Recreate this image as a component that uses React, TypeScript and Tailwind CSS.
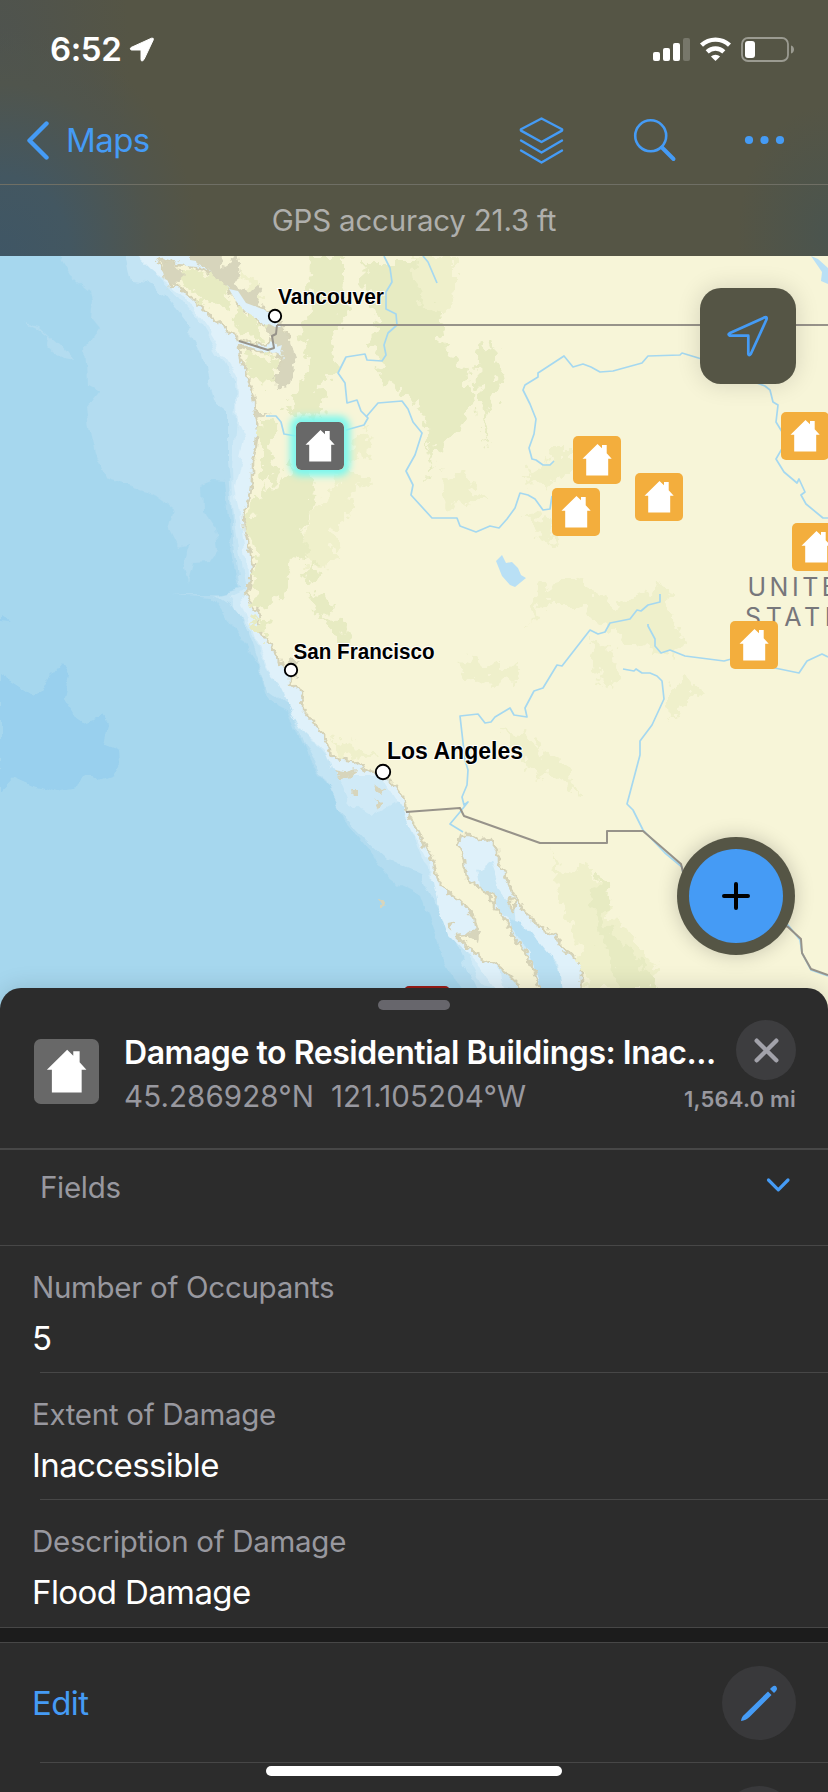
import React from "react";

const HOUSE = "M24.5 8L29 12.3V9H33.7V17.2L38.7 22.7H35.2V39.5H13.2V22.7H9.5Z";

const incidents: [number, number][] = [
  [573, 436],
  [635, 473],
  [552, 488],
  [781, 412],
  [792, 523],
  [730, 621],
];

const VANCOUVER_ISLAND =
  "M157 263L163 259L178 264L190 265L206 272L218 277L225 288L232 294L240 309L250 315L262 324L268 331L273 339L268 344L259 345L248 341L238 338L230 333L222 325L213 319L205 309L195 301L185 292L178 285L170 287L168 276Z";
const MAINLAND =
  "M188 250L196 262L207 265L215 270L224 280L230 287L238 291L246 300L258 306L272 312L281 325L290 338L289 372L280 388L275 380L282 358L272 352L258 352L239 346L240 357L247 370L250 385L254 395L256 412L258 430L256 445L252 460L252 480L249 500L244 515L245 530L250 550L253 565L252 580L246 593L250 602L258 612L260 630L270 645L277 655L280 664L290 670L290 684L303 692L302 709L313 722L325 737L330 750L331 758L352 761L370 772L383 774L395 786L403 797L407 812L417 829L426 848L434 862L437 878L448 893L462 903L474 916L477 930L466 935L456 936L470 949L482 959L497 965L509 975L518 984L522 1000L524 1040L545 1040L539 985L535 972L524 950L514 938L507 921L496 908L487 895L478 886L466 878L464 860L459 845L461 835L470 835L479 840L490 839L498 850L498 862L505 874L513 893L521 905L531 919L545 931L554 934L560 945L573 956L582 964L582 976L580 1040L840 1040L840 250Z";

const SHELVES: { fill: string; d: string }[] = [
  {
    fill: "#b3dcf0",
    d: "M55 250L70 275L90 292L92 300L90 318L98 328L86 345L88 385L99 391L86 408L90 430L96 455L106 478L130 486L151 493L175 510L170 530L178 546L187 543L183 570L187 583L192 563L210 562L218 550L215 528L203 510L202 485L215 480L225 481L229 520L232 560L239 590L222 594H170L213 597L232 625L258 665L269 700L288 710L310 760L330 790L345 820L370 850L380 868L400 885L420 895L440 950L470 1010L560 1010L560 700L300 600L290 300L230 250Z",
  },
  {
    fill: "#c3e4f4",
    d: "M126 250L132 280L145 282L165 295L185 320L203 355L214 400L228 410L228 460L232 510L235 555L240 590L216 596L240 612L254 650L268 690L290 706L305 745L325 780L339 809L365 838L390 862L420 875L445 920L480 1000L580 1000L560 700L300 600L290 300L230 250Z",
  },
  {
    fill: "#d0eaf7",
    d: "M131 250L150 268L173 290L198 320L222 360L234 383L236 420L232 465L233 510L240 555L245 590L228 598L245 620L264 660L288 700L306 735L333 765L350 805L370 817L400 800L422 855L445 908L480 985L580 1000L560 700L300 600L290 300L230 250Z",
  },
  {
    fill: "#dff1fa",
    d: "M132 250L153 271L181 291L208 330L236 377L238 425L245 440L235 487L240 520L246 555L248 588L242 600L256 640L272 672L291 712L305 734L325 752L331 770L350 775L380 775L408 820L430 865L438 905L448 935L480 968L508 1000L450 830L300 600L290 300L230 250Z",
  },
  { fill: "#b3dcf0", d: "M22 321L38 325L50 336L60 345L73 360L62 358L49 347L50 337L38 328Z" },
  {
    fill: "#99d0ee",
    d: "M0 675L32 696L53 675L62 664L69 675L63 700L72 715L82 722L102 715L109 725L105 747L118 752L119 762L112 775L98 780L83 775L77 788L56 792L32 785L14 777L0 792Z",
  },
  { fill: "#99d0ee", d: "M0 615L10 622L0 621Z" },
];

const GULF: { fill: string; d: string }[] = [
  { fill: "#dff1fa", d: "M455 828H500L515 890L560 938L590 965L585 1010H545L520 930L455 878Z" },
  { fill: "#c9e7f5", d: "M476 870L490 862L498 885L512 905L514 925L540 950L560 965L565 1010H548L528 950L506 915L480 890Z" },
  { fill: "#b9e0f3", d: "M508 918L522 922L540 945L560 970L566 1010H548L530 955Z" },
];

const SAND = [
  "M188 250L222 250L221 270L232 262L236 250L240 275L234 285L250 292L261 282L258 305L248 308L230 290L222 282L205 268L190 262Z",
  "M272 312L282 326L290 340L296 358L290 385L276 390L275 374L284 358L276 345L266 332Z",
  "M160 259L175 264L185 275L174 285L165 280Z",
  "M333 770L345 772L357 769L354 776L340 778Z",
  "M351 791h7v5h-6z",
  "M374 785L384 790L382 795L376 791Z",
  "M374 797L382 805L379 808Z",
  "M379 899L385 902L384 909L380 906Z",
  "M288 659L300 661L291 668L300 679L290 675Z",
  "M255 413L269 413L258 419Z",
  "M470 930L480 932L478 942L468 937Z",
];

const FOREST = [
  "M178 271L190 268L215 278L225 290L230 305L218 306L205 305L190 292Z",
  "M234 318L245 312L262 322L264 342L248 338L236 332Z",
  "M245 354L275 355L282 360L270 380L262 388L252 375Z",
  "M308 258H345V275L340 292L350 310L335 330L330 345L338 370L322 385L320 420L285 410L290 395L302 385L308 360L303 330L312 310Z",
  "M365 262H384V290L372 300L364 285Z",
  "M260 420L275 418L272 445L278 480L268 490L262 470Z",
  "M252 495L280 488L292 460L318 482L310 510L302 530L310 550L290 565L285 590L262 612L252 598L258 560L248 535Z",
  "M385 262H415L420 295L440 320L445 345L468 375L472 400L460 425L450 440L432 450L430 475L440 465L425 478L432 440L414 400L385 380L375 350L365 345L380 330L370 305Z",
  "M480 342L496 348L503 372L494 405L482 420L492 448L480 430L478 400L476 365Z",
  "M250 618L270 622L262 640Z",
  "M308 592L325 596L333 612L328 620L314 612Z",
  "M300 575L320 562L312 580Z",
  "M325 620L346 622L345 655L336 640Z",
  "M598 872L610 895L605 925L618 940L645 965L658 990H618L612 965L600 935L592 900Z",
];

const SCRUB = [
  "M414 258H455V290L445 320L414 300Z",
  "M345 450L372 430L370 455L345 465L372 482L355 490L345 520L330 530L340 560L320 570L300 560L310 510L330 495Z",
  "M442 480L465 475L485 498L460 502L447 508Z",
  "M522 475L540 470L550 450L573 450V470L550 485L530 482Z",
  "M522 515L550 520L555 545L545 540Z",
  "M535 590L575 577L605 600L620 605L640 595L665 585L672 620L685 640L670 655L645 650L625 640L600 625L580 605L545 605L528 625Z",
  "M460 678L470 652L483 665L518 667L516 682L490 680L462 682Z",
  "M500 732L530 735L545 755L575 768L570 780L580 795L552 778L530 770Z",
  "M590 640L612 650L620 680L605 690L595 660Z",
  "M668 690L685 680L705 692L685 700L672 725Z",
  "M332 738L350 746L380 756L365 762L345 755Z",
  "M549 850L562 875L590 865L600 900L625 930L655 965L645 990H590L580 960L568 920L555 880Z",
  "M240 270L262 285L262 300L250 298Z",
];

const RIVERS = [
  "M384 256L390 268L392 282L386 292L386 309L396 314L397 325L388 333L384 345L386 355L382 361L367 360L365 354L346 357L338 373L345 383L347 403L357 400L361 411L368 418L364 425L346 430",
  "M266 416L276 416L281 422L284 434L296 436",
  "M366 417L378 403L402 401L408 409L413 422L422 433L415 455L406 471L413 485L411 495L432 518L457 518L460 526L476 532L490 526L499 528L507 519L515 508L520 493L528 495L535 499L543 510L550 509L552 496",
  "M423 256L428 262L437 283",
  "M554 461L550 465L543 465L536 460L532 459L529 448L534 434L536 419L530 404L523 390L525 385L538 377V373L564 356L573 367L583 364L591 367L600 372L613 371L642 363L648 356L680 355L682 353L705 360L735 375L765 386L770 390L773 402L778 405L776 422L787 440L776 459L784 472L797 483L799 479L805 492L801 495L806 504L823 518H828",
  "M660 594V602L648 605L641 611L637 610L630 619L610 623L605 632L598 634L590 630L562 666L557 665L543 688L534 691L525 708L527 717L514 715L510 708L495 717L491 722L485 723L478 714L460 716L465 760L468 770L467 785L462 797L464 805L468 802L460 812L450 824L463 832",
  "M648 624V626L655 639L655 646L661 653L670 650L685 656L724 661L735 658L770 667L799 673L807 661L822 654L828 657",
  "M623 669L634 671L636 669L642 673L650 673L657 676L662 681L664 699L652 725L640 741V755L627 804L633 810L643 830",
  "M643 830L665 853L682 867L685 885L745 920L788 925L800 940L802 953L811 970L828 976",
];

const BORDERS = [
  "M277 325L276 334L272 336L274 348L268 350L239 341",
  "M277 325H828",
  "M406 812L460 808L464 816L540 843H607V831H643L681 864L685 880L730 900L788 927L801 939L802 953L811 969L828 975",
];

function MapCanvas() {
  return (
    <svg className="block h-[774px] w-[828px]" viewBox="0 256 828 774">
      <defs>
        <filter id="coast" x="0" y="250" width="840" height="790" filterUnits="userSpaceOnUse">
          <feTurbulence type="fractalNoise" baseFrequency="0.16" numOctaves="2" seed="4" />
          <feDisplacementMap in="SourceGraphic" scale="9" xChannelSelector="R" yChannelSelector="G" />
        </filter>
        <filter id="rough" x="0" y="250" width="840" height="790" filterUnits="userSpaceOnUse">
          <feTurbulence type="fractalNoise" baseFrequency="0.09" numOctaves="3" seed="9" />
          <feDisplacementMap in="SourceGraphic" scale="26" xChannelSelector="R" yChannelSelector="G" />
        </filter>
        <filter id="shelf" x="-20" y="230" width="880" height="820" filterUnits="userSpaceOnUse">
          <feTurbulence type="fractalNoise" baseFrequency="0.05" numOctaves="3" seed="2" />
          <feDisplacementMap in="SourceGraphic" scale="12" xChannelSelector="R" yChannelSelector="G" />
        </filter>
      </defs>
      <rect y="256" width="828" height="774" fill="#a6d7ee" />
      <g filter="url(#shelf)">
        {SHELVES.map((s, i) => (
          <path key={i} d={s.d} fill={s.fill} />
        ))}
        {GULF.map((s, i) => (
          <path key={i} d={s.d} fill={s.fill} />
        ))}
      </g>
      <g filter="url(#coast)" stroke="#d6d3b8" strokeWidth="2.6" strokeLinejoin="round">
        <path d={MAINLAND} fill="#f7f5d8" />
        <path d={VANCOUVER_ISLAND} fill="#f7f5d8" />
        <path d="M487 890L493 893L497 904L491 902Z" fill="#f7f5d8" />
        <path d="M510 897L516 902L513 912L510 908Z" fill="#f7f5d8" />
        <path d="M448 923L453 922L450 928Z" fill="#f7f5d8" />
      </g>
      <g filter="url(#rough)">
        {SCRUB.map((d, i) => (
          <path key={i} d={d} fill="#eff0cb" />
        ))}
        {FOREST.map((d, i) => (
          <path key={i} d={d} fill="#e7ebc2" />
        ))}
      </g>
      <g filter="url(#coast)" fill="#d7d5bc">
        {SAND.map((d, i) => (
          <path key={i} d={d} />
        ))}
      </g>
      <g fill="#dff1fa">
        <path d="M229 289L238 291L246 303L265 310L274 319L281 327L275 327L262 320L246 312L236 301Z" />
        <path d="M178 258L196 261L197 267L186 266Z" />
        <path d="M268 350L282 345L280 352L272 353Z" />
      </g>
      <g fill="#b9e0f5">
        <path d="M496 561L502 555L506 563L512 562L518 568L521 575L526 578L515 587L510 585L502 576Z" />
        <path d="M811 256L818 259L828 268V284L821 281L822 272Z" />
      </g>
      <g fill="none" stroke="#a5d8f0" strokeWidth="1.7" strokeLinejoin="round">
        {RIVERS.map((d, i) => (
          <path key={i} d={d} />
        ))}
      </g>
      <g fill="none" stroke="#97938a" strokeWidth="2" strokeLinejoin="round">
        {BORDERS.map((d, i) => (
          <path key={i} d={d} />
        ))}
      </g>
      <g fill="#fff" stroke="#000" strokeWidth="1.9">
        <circle cx="275" cy="316" r="6.200" />
        <circle cx="291" cy="670" r="6.200" />
        <circle cx="383" cy="772" r="7.200" />
      </g>
      <g
        fontFamily="'Liberation Sans', Arial, sans-serif"
        fontWeight="700"
        fill="#000"
        stroke="#fff"
        strokeWidth="2"
        paintOrder="stroke"
      >
        <text x="278" y="304" fontSize="22" textLength="106" lengthAdjust="spacingAndGlyphs">Vancouver</text>
        <text x="293.500" y="658.500" fontSize="22" textLength="141" lengthAdjust="spacingAndGlyphs">San Francisco</text>
        <text x="387" y="759" fontSize="23.500" textLength="136" lengthAdjust="spacingAndGlyphs">Los Angeles</text>
      </g>
      <g fontFamily="Inter, sans-serif" fontSize="25" fill="#77777b">
        <text x="747.500" y="595.500" letterSpacing="3.500">UNITED</text>
        <text x="745" y="625.500" letterSpacing="4.600">STATES</text>
      </g>
      {incidents.map(([x, y]) => (
        <g key={`${x}-${y}`} transform={`translate(${x} ${y})`}>
          <rect width="48" height="48" rx="5" fill="#f3ae3d" />
          <path d={HOUSE} fill="#fff" />
        </g>
      ))}
    </svg>
  );
}

function StatusIcons() {
  return (
    <svg className="h-[26px] w-[142px]" viewBox="653 36 142 26">
      <g fill="#fff">
        <rect x="653" y="52" width="7" height="9" rx="2" />
        <rect x="663" y="48" width="7" height="13" rx="2" />
        <rect x="673" y="43" width="7" height="18" rx="2" />
        <rect x="683" y="38" width="7" height="23" rx="2" opacity="0.2" />
        <path d="M715.500 61L710.900 56.600A6.800 6.800 0 0 1 720.100 56.600Z" />
      </g>
      <g fill="none" stroke="#fff" strokeWidth="4.400">
        <path d="M701.500 45.200A20.500 20.500 0 0 1 729.500 45.200" />
        <path d="M707.200 51.800A12 12 0 0 1 723.800 51.800" />
      </g>
      <rect x="742" y="38" width="46" height="23" rx="6" fill="none" stroke="#9b9b91" strokeWidth="1.800" />
      <rect x="745" y="41" width="10" height="17" rx="3" fill="#fff" />
      <path d="M791 45.500C795 46.500 795 52.500 791 53.500Z" fill="#9b9b91" />
    </svg>
  );
}

function Header() {
  return (
    <header className="h-[256px] bg-[#555545] bg-[radial-gradient(ellipse_200px_230px_at_0px_256px,#3f5665_0%,#435761_35%,#50554d_75%,transparent_100%),radial-gradient(ellipse_90px_130px_at_828px_235px,#4a544e_0%,transparent_100%),radial-gradient(ellipse_130px_280px_at_0px_60px,#4e534f_0%,transparent_100%)]">
      <div className="flex h-[98px] items-center justify-between pl-[50px] pr-[33px]">
        <div className="flex items-center">
          <span className="text-[33px] font-semibold leading-10 tracking-[-0.4px] text-white">6:52</span>
          <svg className="ml-[8px] h-[26px] w-[26px]" viewBox="0 0 26 26">
            <path d="M2 11.500L22.500 2.200Q25 1.500 24.200 4L15 23.500Q12.300 26.500 12 23.500V14H2.500Q0 13 2 11.500Z" fill="#fff" stroke="#fff" strokeWidth="1" />
          </svg>
        </div>
        <StatusIcons />
      </div>
      <nav className="flex h-[87px] items-center justify-between border-b border-[#6f6f65] pl-[26px] pr-[43px] text-[#459bf5]">
        <div className="flex items-center">
          <svg className="h-[40px] w-[24px]" viewBox="0 0 24 40" fill="none" stroke="currentColor" strokeWidth="4.400" strokeLinecap="round" strokeLinejoin="round">
            <path d="M20.500 2.500L3.500 19.500L20.500 36.500" />
          </svg>
          <span className="-mt-[3px] ml-[16px] text-[33px] leading-10 tracking-[-0.6px]">Maps</span>
        </div>
        <svg className="h-[50px] w-[266px]" viewBox="518 116 266 50" fill="none" stroke="currentColor" strokeLinecap="round" strokeLinejoin="round">
          <g strokeWidth="2.400">
            <path d="M540.500 118.500L561 129.200Q561.500 130 561 130.600L540.500 142L520 130.600Q519.500 130 520 129.200Z" />
            <path d="M520 140.500L540.500 152.500L561 140.500M520 150.500L540.500 162.500L561 150.500" />
          </g>
          <circle cx="649.700" cy="135.800" r="15.500" strokeWidth="2.600" />
          <path d="M661 147.500L672.500 159" strokeWidth="4" />
          <g fill="currentColor" stroke="none">
            <circle cx="748" cy="140" r="4.100" />
            <circle cx="763.500" cy="140" r="4.100" />
            <circle cx="779" cy="140" r="4.100" />
          </g>
        </svg>
      </nav>
      <p className="text-center text-[29.500px] leading-[71px] tracking-[-0.2px] text-[#afafac]">GPS accuracy 21.3 ft</p>
    </header>
  );
}

function Field({ label, value, last }: { label: string; value: string; last?: boolean }) {
  return (
    <div>
      <div className={`flex flex-col gap-[11px] pl-8 pt-[21px] ${last ? "h-[127px]" : "h-[126px]"}`}>
        <span className="text-[29.500px] leading-10 tracking-[-0.3px] text-[#98989f]">{label}</span>
        <span className="text-[33px] leading-10 tracking-[-0.6px] text-white">{value}</span>
      </div>
      <div className={`h-px bg-[#474747] ${last ? "" : "ml-10"}`} />
    </div>
  );
}

export default function App() {
  return (
    <div className="h-[1792px] w-[828px] overflow-hidden bg-[#2c2c2c] font-[Inter,sans-serif]">
      <Header />
      <div className="relative">
        <MapCanvas />
        <svg className="absolute left-[296px] top-[166px] h-12 w-12 rounded-[5px] shadow-[0_0_7px_6px_#7ef7ee]" viewBox="0 0 48 48">
          <rect width="48" height="48" rx="5" fill="#686868" />
          <path d={HOUSE} fill="#fff" />
        </svg>
        <button className="absolute left-[700px] top-[32px] flex h-24 w-24 items-center justify-center rounded-[21px] bg-[#555545] shadow-[0_0_24px_rgba(0,0,0,0.14)]">
          <svg className="h-[42px] w-[42px]" viewBox="0 0 42 42" fill="none" stroke="#459bf5" strokeWidth="2.700" strokeLinejoin="round">
            <path d="M2.500 18.300L37.800 2.300Q40.200 1.500 39.500 4.500L23.800 39Q22 41.200 21.300 39V20.700H3Q0.500 19.500 2.500 18.300Z" />
          </svg>
        </button>
        <button className="absolute left-[677px] top-[581px] flex h-[118px] w-[118px] items-center justify-center rounded-full bg-[#555545] shadow-[0_0_20px_rgba(0,0,0,0.2)]">
          <span className="flex h-[94px] w-[94px] items-center justify-center rounded-full bg-[#459bf5]">
            <svg className="h-7 w-7" viewBox="0 0 28 28" stroke="#000" strokeWidth="4" strokeLinecap="round">
              <path d="M14 2V26M2 14H26" />
            </svg>
          </span>
        </button>
        <div className="absolute left-[404px] top-[730px] h-4 w-[46px] rounded-[5px] bg-[#9a1c17]" />
      </div>

      <section className="relative -mt-[42px] h-[804px] rounded-t-[21px] bg-[#2c2c2c] shadow-[0_0_24px_rgba(0,0,0,0.14)]">
        <div className="flex h-[22px] items-end justify-center">
          <div className="h-[10px] w-[72px] rounded-full bg-[#67666c]" />
        </div>
        <div className="flex h-[140px] border-b-2 border-[#474747] pl-[34px] pr-8 pt-[10px]">
          <svg className="mt-[19px] h-[65px] w-[65px] shrink-0" viewBox="0 0 48 48">
            <rect width="48" height="48" rx="5" fill="#686868" />
            <path d={HOUSE} fill="#fff" />
          </svg>
          <div className="ml-[25px] flex min-w-0 flex-1 flex-col pt-[13px]">
            <h1 className="whitespace-nowrap text-[32px] font-semibold leading-10 tracking-[-0.45px] text-white">Damage to Residential Buildings: Inac...</h1>
            <p className="mt-[3px] whitespace-pre text-[29.500px] leading-10 tracking-[0.1px] text-[#98989f]">45.286928°N  121.105204°W</p>
          </div>
          <div className="flex w-[60px] shrink-0 flex-col items-end">
            <button className="flex h-[60px] w-[60px] items-center justify-center rounded-full bg-[#3d3d3f]">
              <svg className="h-[25px] w-[25px]" viewBox="0 0 25 25" stroke="#a2a2aa" strokeWidth="4.400" strokeLinecap="round">
                <path d="M2.700 2.700L22.300 22.300M22.300 2.700L2.700 22.300" />
              </svg>
            </button>
            <span className="mt-[3px] whitespace-nowrap text-[22px] font-semibold leading-8 tracking-[0.2px] text-[#98989f]">1,564.0 mi</span>
          </div>
        </div>

        <div className="flex h-[96px] items-start justify-between border-b border-[#474747] pl-10 pr-[37px] pt-[17px]">
          <span className="text-[29.500px] leading-10 tracking-[-0.3px] text-[#98989f]">Fields</span>
          <svg className="mt-[10px] h-[16px] w-[26px]" viewBox="0 0 26 16" fill="none" stroke="#459bf5" strokeWidth="3.200" strokeLinecap="round" strokeLinejoin="round">
            <path d="M3.500 3L13.300 12.800L23 3" />
          </svg>
        </div>

        <Field label="Number of Occupants" value="5" />
        <Field label="Extent of Damage" value="Inaccessible" />
        <Field label="Description of Damage" value="Flood Damage" last />
        <div className="h-[15px] border-b border-[#474747] bg-[#1c1c1c]" />

        <div className="flex h-[119px] items-center justify-between pl-8 pr-8">
          <span className="text-[33px] leading-10 tracking-[-0.6px] text-[#459bf5]">Edit</span>
          <button className="flex h-[74px] w-[74px] items-center justify-center rounded-full bg-[#39393b]">
            <svg className="h-[38px] w-[38px]" viewBox="0 0 38 38" fill="#459bf5">
              <path d="M28 7.500L31.500 11L9.500 33Q6 36.500 1 37Q1.500 32.500 4.500 30.500Z" />
              <path d="M30 5L32 3Q35 0.500 36.500 3Q38 5 36 7L34 9Z" />
            </svg>
          </button>
        </div>
        <div className="ml-10 h-px bg-[#474747]" />
        <div className="flex justify-end pr-8 pt-[23px]">
          <div className="h-[74px] w-[74px] shrink-0 rounded-full bg-[#39393b]" />
        </div>
        <div className="absolute left-[266px] top-[778px] h-[10px] w-[296px] rounded-full bg-white" />
      </section>
    </div>
  );
}
